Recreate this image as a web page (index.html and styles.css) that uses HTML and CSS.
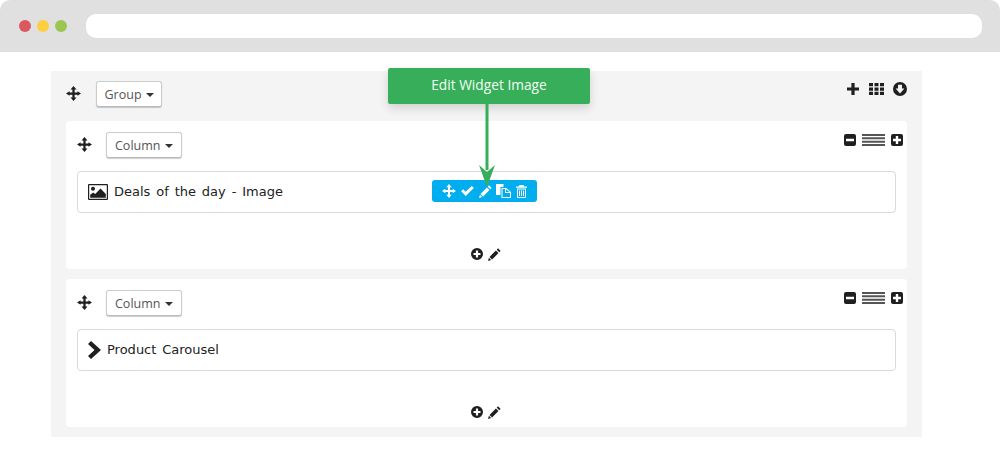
FILE: index.html
```html
<!DOCTYPE html>
<html lang="en">
<head>
    <meta charset="UTF-8">
    <title>Edit Widget Image</title>
    <link rel="stylesheet" href="styles.css">
</head>
<body>
    <svg class="icon-defs" width="0" height="0">
        <symbol id="i-move" viewBox="0 0 16 16"><path d="M8 0l3.200 3.800H9.200v3h3V5.500L16 8l-3.800 2.500V9.200h-3v3h2L8 16l-3.200-3.800h2v-3h-3v1.300L0 8l3.800-2.500v1.300h3v-3h-2z"/></symbol>
        <symbol id="i-plus" viewBox="0 0 12 12"><path d="M4.400 0h3.200v4.400H12v3.200H7.600V12H4.400V7.600H0V4.400h4.400z"/></symbol>
        <symbol id="i-grid" viewBox="0 0 15 12"><path d="M0 0h4v3.300H0zM5.500 0h4v3.300h-4zM11 0h4v3.300h-4zM0 4.400h4v3.300H0zM5.500 4.400h4v3.300h-4zM11 4.400h4v3.300h-4zM0 8.700h4V12H0zM5.500 8.700h4V12h-4zM11 8.700h4V12h-4z"/></symbol>
        <symbol id="i-down" viewBox="0 0 14 14"><path fill-rule="evenodd" d="M7 0a7 7 0 1 1 0 14A7 7 0 0 1 7 0zM5 2.800v3.600H2.600L7 11.400l4.400-5H9V2.800z"/></symbol>
        <symbol id="i-minus-box" viewBox="0 0 12 12"><path fill-rule="evenodd" d="M2 0h8a2 2 0 0 1 2 2v8a2 2 0 0 1-2 2H2a2 2 0 0 1-2-2V2a2 2 0 0 1 2-2zM2 4.700v2.600h8V4.700z"/></symbol>
        <symbol id="i-plus-box" viewBox="0 0 12 12"><path fill-rule="evenodd" d="M2 0h8a2 2 0 0 1 2 2v8a2 2 0 0 1-2 2H2a2 2 0 0 1-2-2V2a2 2 0 0 1 2-2zM4.800 2v2.800H2v2.400h2.800V10h2.400V7.200H10V4.800H7.200V2z"/></symbol>
        <symbol id="i-lines" viewBox="0 0 23 12"><path d="M0 0h23v2H0zM0 3.300h23v2H0zM0 6.700h23v2H0zM0 10h23v2H0z"/></symbol>
        <symbol id="i-plus-circle" viewBox="0 0 12 12"><path fill-rule="evenodd" d="M6 0a6 6 0 1 1 0 12A6 6 0 0 1 6 0zM4.900 2.500v2.400H2.500v2.200h2.400v2.400h2.200V7.100h2.400V4.900H7.100V2.500z"/></symbol>
        <symbol id="i-pencil" viewBox="0 0 14 14"><path d="M10.800.4l2.800 2.800-1.400 1.400-2.800-2.800zM8.500 2.700l2.800 2.800-6.900 6.900-2.800-2.800zM1 10.600l2.400 2.400L0 14z"/></symbol>
        <symbol id="i-check" viewBox="0 0 14 11"><path d="M0 5.800l2.300-2.300 2.700 2.700L11.700 0 14 2.300 5 11z"/></symbol>
        <symbol id="i-copy" viewBox="0 0 15 14"><path fill-rule="evenodd" d="M0 0h7.500v3H4.500v8H0zM5.500 4h4.800L15 8v6H5.500zM6.500 5v8H14V9h-5V5zM10 5.200V8h3.400z"/></symbol>
        <symbol id="i-trash" viewBox="0 0 11 13"><path fill-rule="evenodd" d="M3.500 0h4l.8 1.500H11v1.300H0V1.500h2.700zM1 3.500h9V12a1 1 0 0 1-1 1H2a1 1 0 0 1-1-1zM2 4.500V12h7V4.500zM3 5.500h1V11H3zM5 5.500h1V11H5zM7 5.500h1V11H7z"/></symbol>
        <symbol id="i-picture" viewBox="0 0 20 16"><path fill-rule="evenodd" d="M1 0h18a1 1 0 0 1 1 1v14a1 1 0 0 1-1 1H1a1 1 0 0 1-1-1V1a1 1 0 0 1 1-1zM1.200 1.200v13.600h17.600V1.200zM5 2.800a2 2 0 1 1 0 4 2 2 0 0 1 0-4zM2.200 13.800v-3l3-2.300 2 1.500 5.300-5.500 5.300 5.500v3.800z"/></symbol>
        <symbol id="i-chevron" viewBox="0 0 13 18"><path d="M3 0l10 9-10 9-3-3 6.500-6L0 3z"/></symbol>
    </svg>

    <div class="browser-bar">
        <span class="dot dot-red"></span>
        <span class="dot dot-yellow"></span>
        <span class="dot dot-green"></span>
        <div class="url-bar"></div>
    </div>

    <div class="stage">
        <div class="group">
            <div class="group-head">
                <svg class="icon move"><use href="#i-move"/></svg>
                <button class="drop-btn">Group <span class="caret"></span></button>
                <div class="group-tools">
                    <svg class="icon tool-plus"><use href="#i-plus"/></svg>
                    <svg class="icon tool-grid"><use href="#i-grid"/></svg>
                    <svg class="icon tool-down"><use href="#i-down"/></svg>
                </div>
            </div>

            <div class="column">
                <div class="column-head">
                    <svg class="icon move"><use href="#i-move"/></svg>
                    <button class="drop-btn">Column <span class="caret"></span></button>
                    <div class="column-tools">
                        <svg class="icon box"><use href="#i-minus-box"/></svg>
                        <svg class="icon lines"><use href="#i-lines"/></svg>
                        <svg class="icon box"><use href="#i-plus-box"/></svg>
                    </div>
                </div>
                <div class="widget">
                    <svg class="icon picture"><use href="#i-picture"/></svg>
                    <span class="widget-name">Deals of the day - Image</span>
                    <div class="widget-toolbar">
                        <svg class="icon bar-move"><use href="#i-move"/></svg>
                        <svg class="icon bar-check"><use href="#i-check"/></svg>
                        <svg class="icon bar-pencil"><use href="#i-pencil"/></svg>
                        <svg class="icon bar-copy"><use href="#i-copy"/></svg>
                        <svg class="icon bar-trash"><use href="#i-trash"/></svg>
                    </div>
                </div>
                <div class="column-foot">
                    <svg class="icon foot-plus"><use href="#i-plus-circle"/></svg>
                    <svg class="icon foot-pencil"><use href="#i-pencil"/></svg>
                </div>
            </div>

            <div class="column">
                <div class="column-head">
                    <svg class="icon move"><use href="#i-move"/></svg>
                    <button class="drop-btn">Column <span class="caret"></span></button>
                    <div class="column-tools">
                        <svg class="icon box"><use href="#i-minus-box"/></svg>
                        <svg class="icon lines"><use href="#i-lines"/></svg>
                        <svg class="icon box"><use href="#i-plus-box"/></svg>
                    </div>
                </div>
                <div class="widget">
                    <svg class="icon chevron"><use href="#i-chevron"/></svg>
                    <span class="widget-name">Product Carousel</span>
                </div>
                <div class="column-foot">
                    <svg class="icon foot-plus"><use href="#i-plus-circle"/></svg>
                    <svg class="icon foot-pencil"><use href="#i-pencil"/></svg>
                </div>
            </div>
        </div>

        <div class="callout">Edit Widget Image</div>
        <svg class="callout-arrow" width="24" height="84" viewBox="0 0 24 84">
            <path d="M10.500 0h3v66h-3z"/>
            <path d="M12 83L4 61l8 7 8-7z"/>
        </svg>
    </div>
</body>
</html>
```

FILE: styles.css
```css
* {
    margin: 0;
    padding: 0;
    box-sizing: border-box;
}

body {
    font-family: "Open Sans", sans-serif;
    background: white;
    color: #222;
    overflow: hidden;
}

.icon-defs {
    position: absolute;
}

.icon {
    display: block;
    flex: none;
    fill: #1f1f1f;
}

/* browser chrome */
.browser-bar {
    height: 52px;
    padding: 14px 18px 14px 19px;
    background: #e0e0e0;
    border-radius: 10px 10px 0 0;
    display: flex;
    align-items: center;
    gap: 6px;
}

.dot {
    width: 12px;
    height: 12px;
    border-radius: 50%;
}

.dot-red { background: #d9595f; }
.dot-yellow { background: #fdcf3f; }
.dot-green { background: #9bc654; }

.url-bar {
    flex: 1;
    height: 24px;
    margin-left: 13px;
    background: white;
    border-radius: 10px;
}

/* builder */
.stage {
    position: relative;
    padding: 19px 78px 0 51px;
}

.group {
    height: 366px;
    padding: 0 15px;
    background: #f4f4f4;
}

.group-head {
    height: 50px;
    display: flex;
    align-items: flex-start;
}

.group-head .move {
    width: 15px;
    height: 15px;
    margin-top: 15px;
}

.group-head .drop-btn {
    margin: 10px 0 0 15px;
    padding: 0 7.5px;
}

.group-tools {
    margin-left: auto;
    padding-top: 11px;
    display: flex;
    align-items: center;
    gap: 10px;
}

.tool-plus { width: 12px; height: 12px; }
.tool-grid { width: 15px; height: 12px; }
.tool-down { width: 14px; height: 14px; margin-left: -1px; }

.column {
    height: 148px;
    margin-bottom: 10px;
    padding: 0 11px;
    background: white;
    border-radius: 4px;
}

.column-head {
    height: 50px;
    display: flex;
    align-items: flex-start;
}

.column-head .move {
    width: 15px;
    height: 15px;
    margin-top: 16px;
}

.column-head .drop-btn {
    margin: 11px 0 0 14px;
}

.column-tools {
    margin-left: auto;
    margin-right: -7px;
    padding-top: 13px;
    display: flex;
    gap: 6px;
}

.box { width: 12px; height: 12px; }
.lines { width: 23px; height: 12px; fill: #555; }

.drop-btn {
    height: 26px;
    padding: 0 8px;
    font-family: "Open Sans", sans-serif;
    font-size: 12.5px;
    color: #555;
    background: white;
    border: 1px solid #ccc;
    border-bottom-color: #bbb;
    border-radius: 3px;
    box-shadow: 0 1px 1px rgba(0,0,0,0.2);
}

.caret {
    display: inline-block;
    margin-left: 1px;
    vertical-align: middle;
    border-top: 4px solid #333;
    border-left: 4px solid transparent;
    border-right: 4px solid transparent;
}

.widget {
    position: relative;
    height: 42px;
    padding-left: 10px;
    border: 1px solid #d9d9d9;
    border-radius: 4px;
    display: flex;
    align-items: center;
}

.widget-name {
    margin-bottom: 2px;
    font-family: "DejaVu Sans", sans-serif;
    font-size: 13px;
    word-spacing: 1.75px;
    color: #222;
}

.picture {
    width: 20px;
    height: 16px;
    margin-right: 6px;
}

.chevron {
    width: 13px;
    height: 18px;
    margin-right: 6px;
}

.widget-toolbar {
    position: absolute;
    left: 354px;
    top: 8px;
    width: 105px;
    height: 22px;
    padding-left: 10px;
    background: #00aeef;
    border-radius: 3px;
    display: flex;
    align-items: center;
}

.widget-toolbar .icon {
    fill: white;
}

.bar-move { width: 14px; height: 14px; }
.bar-check { width: 13px; height: 10px; margin-left: 5px; }
.bar-pencil { width: 13px; height: 13px; margin-left: 5px; }
.bar-copy { width: 15px; height: 14px; margin-left: 4px; }
.bar-trash { width: 11px; height: 13px; margin-left: 5px; }

.column-foot {
    height: 56px;
    padding: 35px 0 0 394px;
    display: flex;
    align-items: flex-start;
}

.foot-plus { width: 12px; height: 12px; }
.foot-pencil { width: 13px; height: 13px; margin-left: 5px; }

/* annotation over the builder */
.callout {
    position: absolute;
    left: 388px;
    top: 16px;
    width: 202px;
    height: 36px;
    background: #37ae5a;
    border-radius: 2px;
    box-shadow: 0 4px 10px rgba(0,0,0,0.15);
    color: #f2fff5;
    font-size: 13.75px;
    line-height: 34px;
    text-align: center;
}

.callout-arrow {
    position: absolute;
    left: 475px;
    top: 52px;
    fill: #37ae5a;
}
```
